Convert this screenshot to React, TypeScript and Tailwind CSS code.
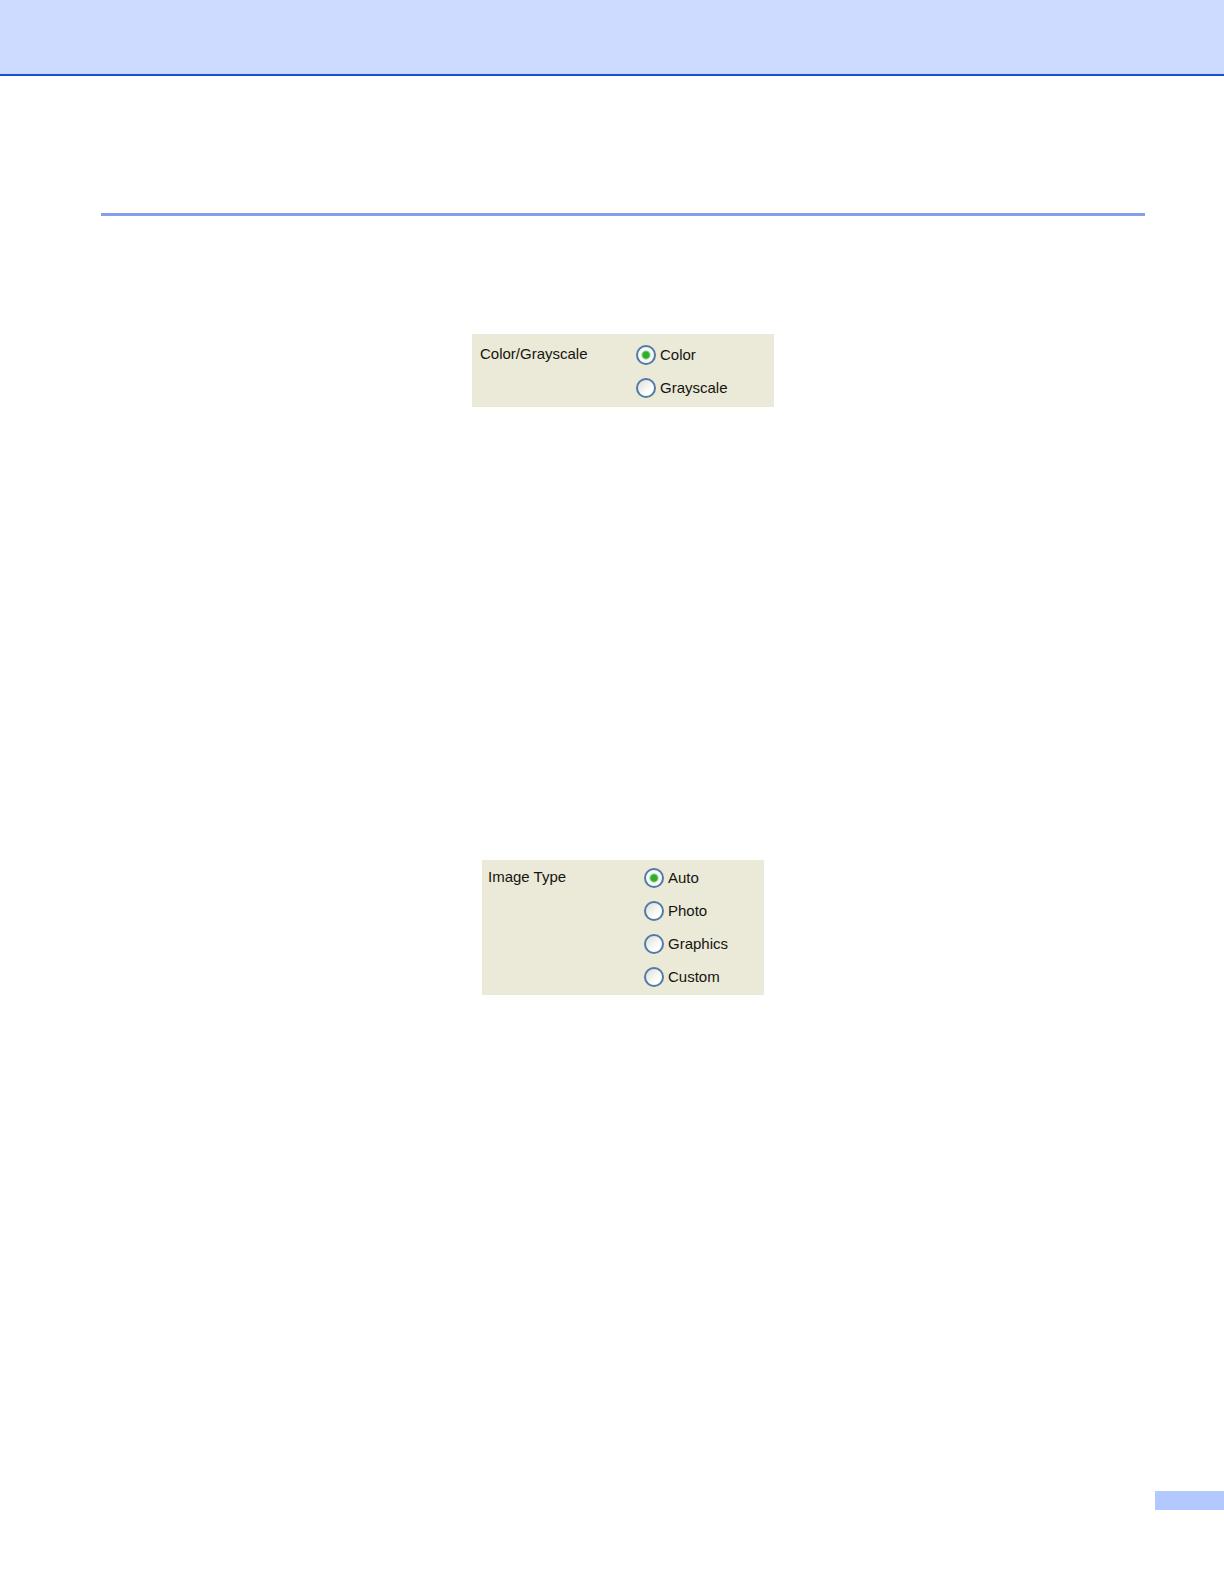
import React, { useState } from 'react';
import clsx from 'clsx';

interface RadioPanelProps {
  name: string;
  title: string;
  options: string[];
  className?: string;
}

const RadioPanel: React.FC<RadioPanelProps> = ({ name, title, options, className }) => {
  const [selected, setSelected] = useState(options[0]);

  return (
    <div
      role="radiogroup"
      aria-labelledby={`${name}-title`}
      className={clsx('flex items-start bg-[#ebe9d8] text-[15px] text-[#15150f]', className)}
    >
      <div id={`${name}-title`} className="w-[156px] shrink-0 leading-[18px]">
        {title}
      </div>
      <div className="flex flex-col gap-[13px] leading-5">
        {options.map((option) => (
          <label key={option} className="flex items-center gap-1">
            <input
              type="radio"
              name={name}
              value={option}
              checked={selected === option}
              onChange={() => setSelected(option)}
              className="size-5 shrink-0 appearance-none rounded-full border-2 border-[#4f7ba6] bg-linear-to-br from-[#dcdcd8] to-white to-70% checked:bg-[radial-gradient(circle,#2fae2b_0_3px,#8ed18a_4px,#f7f8f5_5px)]"
            />
            {option}
          </label>
        ))}
      </div>
    </div>
  );
};

export default function App() {
  return (
    <div className="flex min-h-screen flex-col bg-white font-['Liberation_Sans',Arial,sans-serif]">
      {/* Page header band */}
      <header className="h-[76px] border-b-2 border-[#1c50cf] bg-[#ccdbff]" />

      <main className="mr-[79px] ml-[101px] flex flex-col items-center pt-[137px]">
        <hr className="w-full border-0 border-t-3 border-[#859fec]" />

        <RadioPanel
          name="color-mode"
          title="Color/Grayscale"
          options={['Color', 'Grayscale']}
          className="mt-[118px] w-[302px] pt-[11px] pb-[9px] pl-2"
        />

        <RadioPanel
          name="image-type"
          title="Image Type"
          options={['Auto', 'Photo', 'Graphics', 'Custom']}
          className="mt-[453px] w-[282px] pt-2 pb-2 pl-1.5"
        />
      </main>

      {/* Page number tab */}
      <footer className="mt-auto mb-[74px] flex justify-end">
        <div className="h-[19px] w-[69px] bg-[#b3c8ff]" />
      </footer>
    </div>
  );
}
